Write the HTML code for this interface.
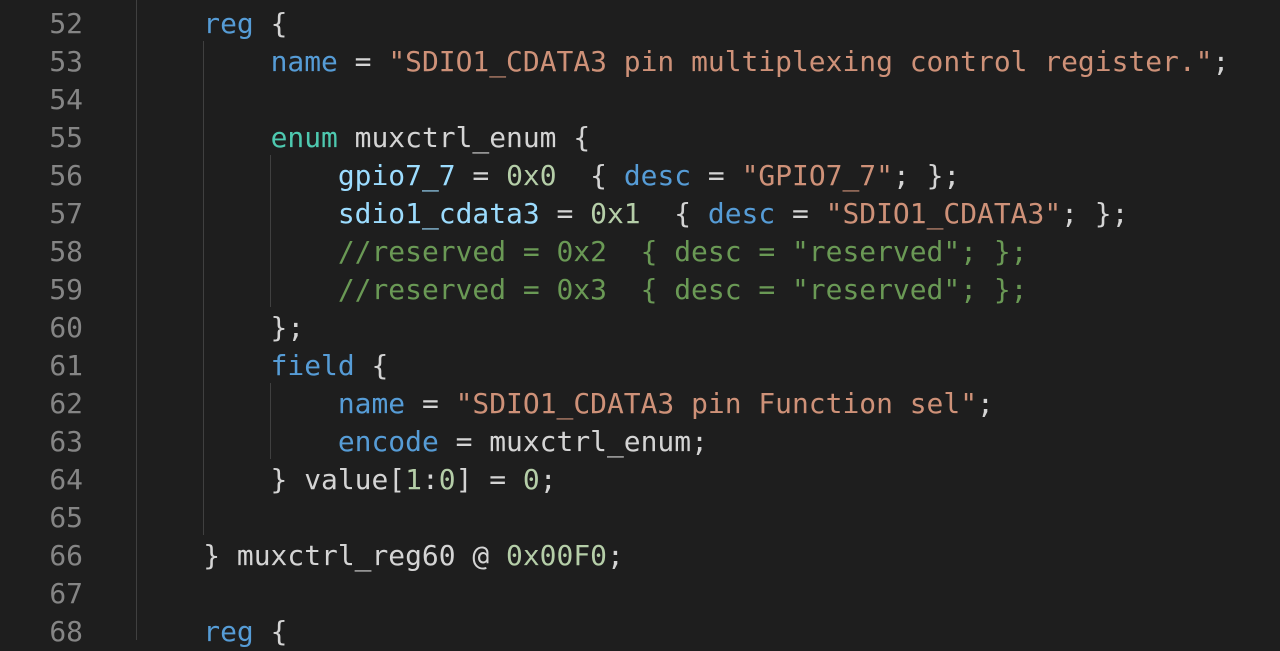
<!DOCTYPE html>
<html><head><style>
body{margin:0;background:#1e1e1e;width:1280px;height:640px;overflow:hidden;position:relative;font-family:"DejaVu Sans Mono","Liberation Mono",monospace;font-size:27.95px;}
.l{position:absolute;left:0;height:38px;line-height:38px;white-space:pre;width:1280px}
.n{position:absolute;right:1197px;color:#858585;text-align:right}
.c{position:absolute;left:136px;color:#d4d4d4}
.k{color:#569cd6}.t{color:#4ec9b0}.v{color:#9cdcfe}.s{color:#ce9178}.m{color:#b5cea8}.g{color:#6a9955}
.gd{position:absolute;width:1px;background:#404040}
</style></head><body>
<div class="gd" style="left:136px;top:0;height:640px"></div>
<div class="gd" style="left:203px;top:41px;height:494px"></div>
<div class="gd" style="left:270px;top:155px;height:152px"></div>
<div class="gd" style="left:270px;top:383px;height:76px"></div>
<div class="l" style="top:5px"><span class="n">52</span><span class="c">    <span class="k">reg</span> {</span></div>
<div class="l" style="top:43px"><span class="n">53</span><span class="c">        <span class="k">name</span> = <span class="s">"SDIO1_CDATA3 pin multiplexing control register."</span>;</span></div>
<div class="l" style="top:81px"><span class="n">54</span></div>
<div class="l" style="top:119px"><span class="n">55</span><span class="c">        <span class="t">enum</span> muxctrl_enum {</span></div>
<div class="l" style="top:157px"><span class="n">56</span><span class="c">            <span class="v">gpio7_7</span> = <span class="m">0x0</span>  { <span class="k">desc</span> = <span class="s">"GPIO7_7"</span>; };</span></div>
<div class="l" style="top:195px"><span class="n">57</span><span class="c">            <span class="v">sdio1_cdata3</span> = <span class="m">0x1</span>  { <span class="k">desc</span> = <span class="s">"SDIO1_CDATA3"</span>; };</span></div>
<div class="l" style="top:233px"><span class="n">58</span><span class="c">            <span class="g">//reserved = 0x2  { desc = "reserved"; };</span></span></div>
<div class="l" style="top:271px"><span class="n">59</span><span class="c">            <span class="g">//reserved = 0x3  { desc = "reserved"; };</span></span></div>
<div class="l" style="top:309px"><span class="n">60</span><span class="c">        };</span></div>
<div class="l" style="top:347px"><span class="n">61</span><span class="c">        <span class="k">field</span> {</span></div>
<div class="l" style="top:385px"><span class="n">62</span><span class="c">            <span class="k">name</span> = <span class="s">"SDIO1_CDATA3 pin Function sel"</span>;</span></div>
<div class="l" style="top:423px"><span class="n">63</span><span class="c">            <span class="k">encode</span> = muxctrl_enum;</span></div>
<div class="l" style="top:461px"><span class="n">64</span><span class="c">        } value[<span class="m">1</span>:<span class="m">0</span>] = <span class="m">0</span>;</span></div>
<div class="l" style="top:499px"><span class="n">65</span></div>
<div class="l" style="top:537px"><span class="n">66</span><span class="c">    } muxctrl_reg60 @ <span class="m">0x00F0</span>;</span></div>
<div class="l" style="top:575px"><span class="n">67</span></div>
<div class="l" style="top:613px"><span class="n">68</span><span class="c">    <span class="k">reg</span> {</span></div>
</body></html>
